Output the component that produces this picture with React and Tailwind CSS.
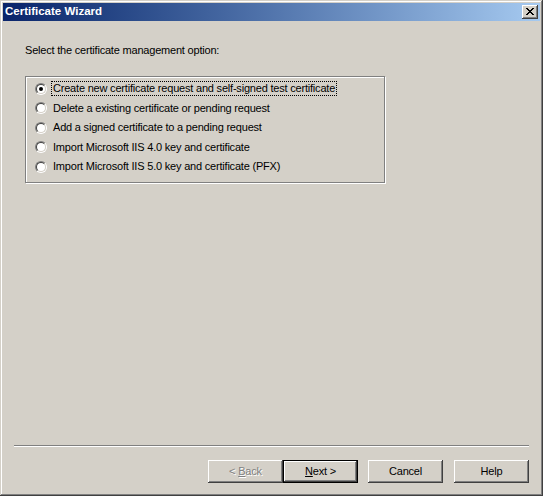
import React from 'react';

const options = [
    'Create new certificate request and self-signed test certificate',
    'Delete a existing certificate or pending request',
    'Add a signed certificate to a pending request',
    'Import Microsoft IIS 4.0 key and certificate',
    'Import Microsoft IIS 5.0 key and certificate (PFX)',
];

const Radio = ({ checked }) => (
    <div className="w-[12px] h-[12px] rounded-full border border-t-[#808080] border-l-[#808080] border-b-white border-r-white shrink-0">
        <div className="w-[10px] h-[10px] rounded-full border border-t-[#404040] border-l-[#404040] border-b-[#d4d0c8] border-r-[#d4d0c8] bg-white flex items-center justify-center">
            {checked && <div className="w-[4px] h-[4px] rounded-full bg-black" />}
        </div>
    </div>
);

const Button = ({ children, isDefault, disabled }) => (
    <div className={`w-[75px] h-[23px] flex items-center justify-center text-[11px] ${isDefault ? 'border border-black' : ''}`}>
        <div className="w-full h-full flex items-center justify-center shadow-[inset_-1px_-1px_#404040,inset_1px_1px_#fff,inset_-2px_-2px_#808080,inset_2px_2px_#d4d0c8]">
            <span className={disabled ? 'text-[#808080] [text-shadow:1px_1px_#fff]' : 'text-black'}>{children}</span>
        </div>
    </div>
);

const App = () => {
    return (
        <div className="w-[543px] h-[496px] bg-[#d4d0c8] p-[3px] flex flex-col shadow-[inset_-1px_-1px_#404040,inset_1px_1px_#d4d0c8,inset_-2px_-2px_#808080,inset_2px_2px_#fff] font-['Liberation_Sans',Arial,sans-serif] text-[11px] tracking-[-0.2px] text-black select-none">
            {/* Title bar */}
            <div className="h-[18px] bg-linear-to-r from-[#0a246a] to-[#a6caf0] flex items-center justify-between pl-[2px] pr-[2px]">
                <span className="text-white font-bold text-[11.5px] tracking-[0px]">Certificate Wizard</span>
                <div className="w-[16px] h-[14px] bg-[#d4d0c8] flex items-center justify-center shadow-[inset_-1px_-1px_#404040,inset_1px_1px_#fff,inset_-2px_-2px_#808080,inset_2px_2px_#d4d0c8]">
                    <svg width="8" height="7" viewBox="0 0 8 7" className="mb-[1px]">
                        <path d="M0 0h2v1h1v1h2V1h1V0h2v1H7v1H6v1H5v1h1v1h1v1h1v1H6V6H5V5H3v1H2v1H0V6h1V5h1V4h1V3H2V2H1V1H0z" fill="#000" />
                    </svg>
                </div>
            </div>

            {/* Body */}
            <div className="flex-1 flex flex-col px-[11px]">
                <div className="pl-[11px] pt-[23px] leading-[13px]">Select the certificate management option:</div>

                <div className="ml-[11px] mt-[19px] w-[360px] h-[107px] border border-[#808080] shadow-[1px_1px_#fff,inset_1px_1px_#fff] pt-[2px] pl-[9px] flex flex-col">
                    {options.map((label, i) => (
                        <div key={label} className="flex items-center gap-[5px] h-[19.5px]">
                            <Radio checked={i === 0} />
                            <span className={`px-[1px] leading-[13px] ${i === 0 ? 'outline outline-1 outline-dotted outline-black' : 'outline outline-1 outline-transparent'}`}>
                                {label}
                            </span>
                        </div>
                    ))}
                </div>

                <div className="flex-1" />

                <div className="border-t border-[#808080] border-b border-b-white" />

                <div className="flex items-center justify-end mt-[13px] mb-[10px]">
                    <Button disabled>&lt; <span className="underline">B</span>ack</Button>
                    <Button isDefault><span className="underline">N</span>ext &gt;</Button>
                    <div className="w-[10px]" />
                    <Button>Cancel</Button>
                    <div className="w-[11px]" />
                    <Button>Help</Button>
                </div>
            </div>
        </div>
    );
};

export default App;
